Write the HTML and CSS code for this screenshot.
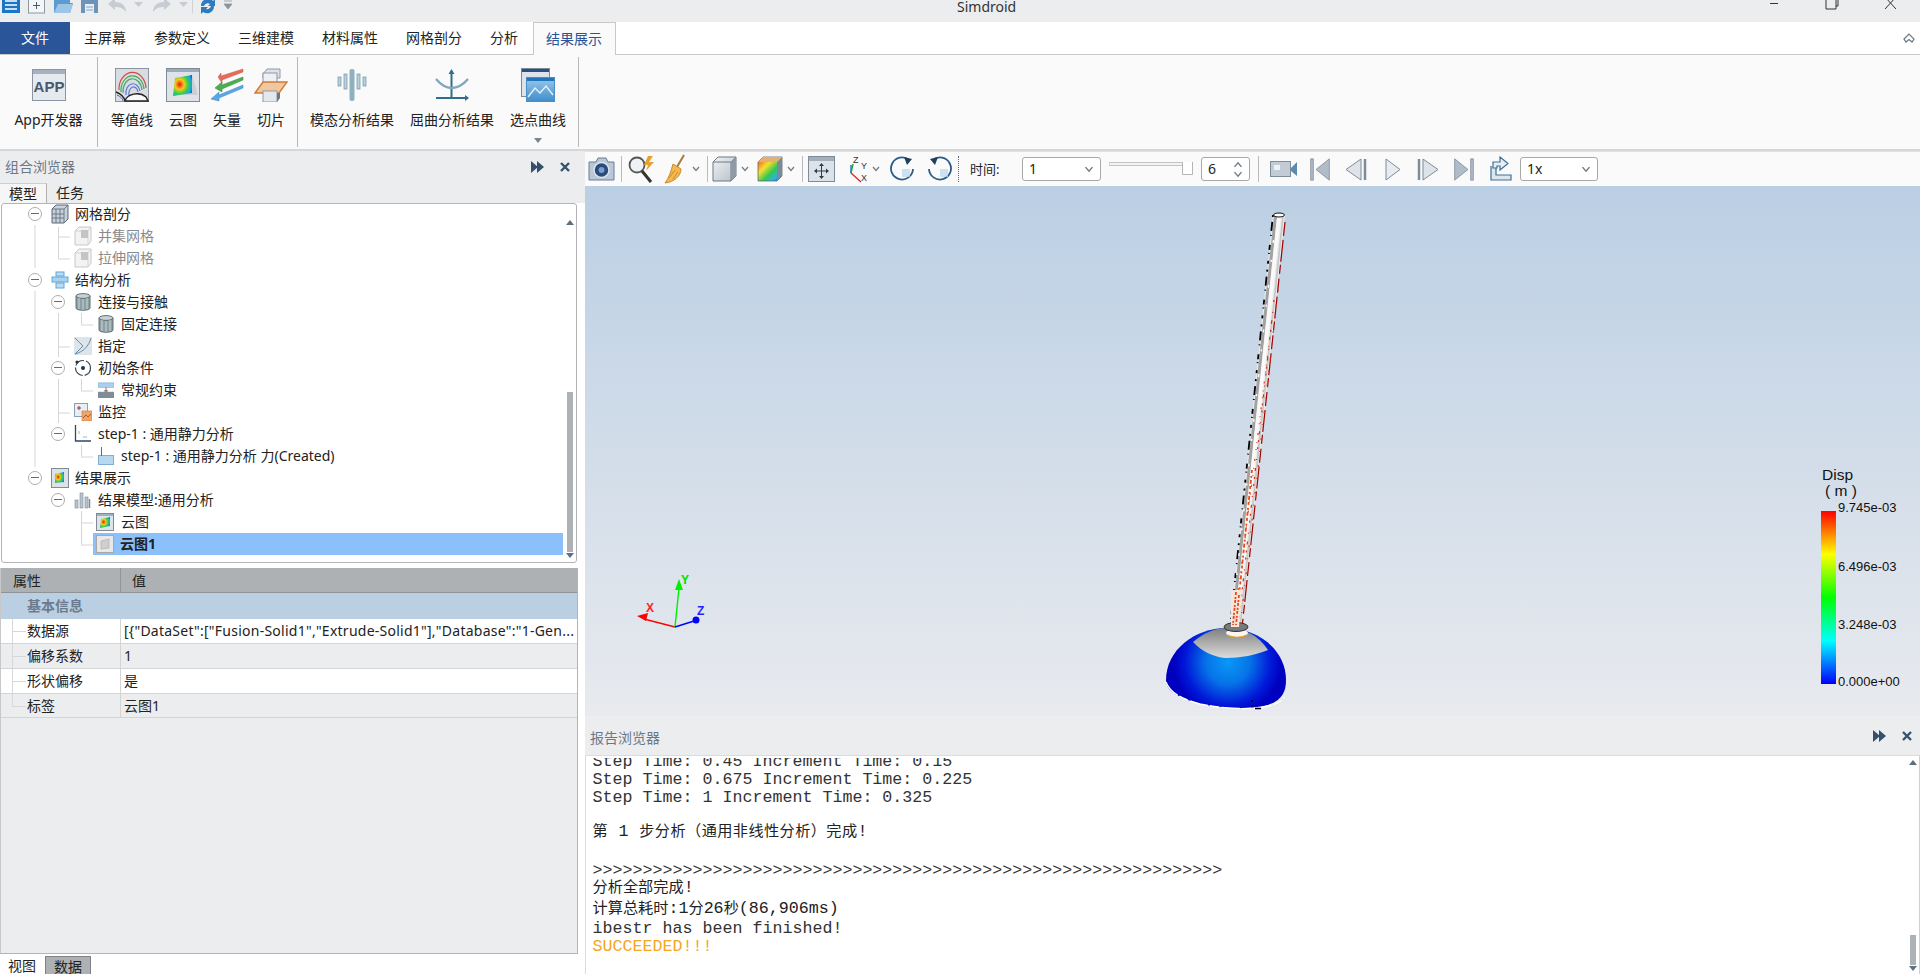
FILE: index.html
```html
<!DOCTYPE html>
<html lang="zh-CN">
<head>
<meta charset="utf-8">
<title>Simdroid</title>
<link rel="stylesheet" href="styles.css">
</head>
<body>
<svg class="defs" aria-hidden="true">
  <defs>
    <linearGradient id="gBlue" x1="0" y1="0" x2="0" y2="1"><stop offset="0" stop-color="#9cc8ec"/><stop offset="1" stop-color="#3f8ecb"/></linearGradient>
    <linearGradient id="gGrey" x1="0" y1="0" x2="1" y2="1"><stop offset="0" stop-color="#f2f4f6"/><stop offset="1" stop-color="#b6bec6"/></linearGradient>
    <linearGradient id="gRain" x1="0" y1="0" x2="1" y2="1"><stop offset="0" stop-color="#f03a20"/><stop offset=".35" stop-color="#f8e030"/><stop offset=".6" stop-color="#30c850"/><stop offset=".8" stop-color="#30b0e8"/><stop offset="1" stop-color="#2040c8"/></linearGradient>
    <radialGradient id="gHeat" cx=".35" cy=".45" r=".8"><stop offset="0" stop-color="#e81810"/><stop offset=".3" stop-color="#f8c818"/><stop offset=".55" stop-color="#38d048"/><stop offset=".8" stop-color="#18a0e8"/><stop offset="1" stop-color="#1030b8"/></radialGradient>
    <linearGradient id="gLegend" x1="0" y1="0" x2="0" y2="1"><stop offset="0" stop-color="#f00"/><stop offset=".25" stop-color="#ff0"/><stop offset=".5" stop-color="#0f0"/><stop offset=".75" stop-color="#0ff"/><stop offset="1" stop-color="#00f"/></linearGradient>
    <radialGradient id="gDome" gradientUnits="userSpaceOnUse" cx="1228" cy="662" r="54"><stop offset="0" stop-color="#0a98f6"/><stop offset=".4" stop-color="#0674e8"/><stop offset=".8" stop-color="#0018d8"/><stop offset="1" stop-color="#0000c0"/></radialGradient>
    <linearGradient id="gCap" x1="0" y1="0" x2="0" y2="1"><stop offset="0" stop-color="#7f7f7f"/><stop offset="1" stop-color="#dcdcdc"/></linearGradient>
    <linearGradient id="gView" x1="0" y1="0" x2="0" y2="1"><stop offset="0" stop-color="#bbcfe4"/><stop offset="1" stop-color="#e8eaee"/></linearGradient>
    <symbol id="iGhost" viewBox="0 0 18 20"><path d="M1 5 5 1H17V15L14 19H1Z" fill="#f3f3f3" stroke="#c8c8c8"/><path d="M1 5H14V19M14 5 17 1" fill="none" stroke="#d4d4d4"/><rect x="7" y="4" width="7" height="8" fill="#c4c4c4"/></symbol>
    <symbol id="iCyl" viewBox="0 0 16 18"><path d="M1 3V15C1 18 15 18 15 15V3Z" fill="#8ea0a4" stroke="#5f7074"/><ellipse cx="8" cy="3" rx="7" ry="2.4" fill="#c6d2d4" stroke="#5f7074"/><path d="M4 5V16M8 6V17M12 5V16" stroke="#c8d4d6"/></symbol>
    <symbol id="iHeat" viewBox="0 0 18 18"><rect x=".5" y=".5" width="17" height="17" fill="#dfe4ea" stroke="#7f8c98"/><rect x="1" y="1" width="16" height="2" fill="#9fb0c2"/><path d="M5 6 14 4V13L4 15Z" fill="url(#gHeat)"/></symbol>
    <symbol id="iChev" viewBox="0 0 8 6"><path d="M1 1 4 4.5 7 1" fill="none" stroke="#6f7c86" stroke-width="1.2"/></symbol>
    <symbol id="iSkip" viewBox="0 0 30 34"><path d="M5 1H1V33H5ZM29 1 9 17 29 33Z" fill="#b0bcc8" stroke="#6f7f8e"/></symbol>
    <symbol id="iNext" viewBox="0 0 22 23"><path d="M6 1 21 11.500 6 22Z" fill="#dde3e8" stroke="#7c8c9a"/><path d="M2 1V22" stroke="#7c8c9a" stroke-width="2.500"/></symbol>
  </defs>
</svg>

<header class="titlebar">
  <svg class="qa" width="240" height="22" viewBox="0 0 240 22">
    <path d="M2 -3H20V13H2Z" fill="#1c76c8"/><path d="M5 1H17M5 5H17M5 9H17" stroke="#fff" stroke-width="1.6"/>
    <rect x="28.500" y="-3" width="16" height="16" fill="#f4f6f8" stroke="#8c98a4"/><path d="M36.500 2V9M33 5.500H40" stroke="#505a64"/>
    <path d="M54 13V0H61L63 -2H70V3H73L70 13Z" fill="#5c9ad0"/><path d="M54 13 58 4H73L70 13Z" fill="#9cc6e8"/>
    <path d="M81 -4H98V13H81Z" fill="#6f93b8"/><rect x="85" y="4" width="9" height="9" fill="#e6eef6"/><path d="M86 7H93M86 10H93" stroke="#8aa4c0"/>
    <path d="M108 4 115 -2V2C122 2 126 6 126 12 123 8 120 7 115 7V10Z" fill="#c6ccd2"/><path d="M134 2H143L138.500 7Z" fill="#c6ccd2"/>
    <path d="M171 4 164 -2V2C157 2 153 6 153 12 156 8 159 7 164 7V10Z" fill="#c6ccd2"/><path d="M179 2H188L183.500 7Z" fill="#c6ccd2"/>
    <path d="M192.500 0V13" stroke="#cfd3d7"/>
    <path d="M201 6A7 7 0 0 1 213 1L215 -1V6H208L210 4A4 4 0 0 0 204 6Z" fill="#2e7cc0"/><path d="M214 6A7 7 0 0 1 203 12L201 14V7H208L206 9A4 4 0 0 0 211 6Z" fill="#2e7cc0"/>
    <path d="M224 1H232M224 4H232L228 9Z" fill="#8a949c" stroke="#8a949c" stroke-width=".8"/>
  </svg>
  <span class="apptitle">Simdroid</span>
  <svg class="winbtns" width="150" height="22" viewBox="1770 0 150 22">
    <path d="M1766 3.500H1778" stroke="#333"/>
    <path d="M1826 -2H1836V9H1826Z" fill="none" stroke="#333"/><path d="M1829 -2V-4H1838V6H1836" fill="none" stroke="#333"/>
    <path d="M1885 -3 1896 9M1896 -3 1885 9" stroke="#333"/>
  </svg>
</header>

<nav class="menubar">
  <span class="filetab">文件</span>
  <span class="mtab">主屏幕</span>
  <span class="mtab">参数定义</span>
  <span class="mtab">三维建模</span>
  <span class="mtab">材料属性</span>
  <span class="mtab">网格剖分</span>
  <span class="mtab">分析</span>
  <span class="mtab active">结果展示</span>
  <svg class="collapse" width="12" height="12" viewBox="0 0 12 12"><path d="M1 7 6 2 11 7 9 10 6 7.500 3 10Z" fill="none" stroke="#6c7882" stroke-width="1.2"/></svg>
</nav>

<section class="ribbon">
  <div class="rgroup g1">
    <div class="ritem">
      <svg width="34" height="32" viewBox="0 0 34 32"><rect x=".5" y=".5" width="33" height="31" fill="#e6e9ee" stroke="#8896a6"/><rect x="1" y="1" width="32" height="4" fill="#a7b2be"/><text x="17" y="23" class="appglyph">APP</text></svg>
      <span class="rlabel">App开发器</span>
    </div>
  </div>
  <div class="rgroup g2">
    <div class="ritem">
      <svg width="34" height="34" viewBox="0 0 34 34"><rect x=".5" y=".5" width="33" height="33" fill="#d9dde2" stroke="#8b96a2"/><path d="M4 22A13 16 0 0 1 31 20" fill="none" stroke="#d24a3c" stroke-width="1.2"/><path d="M6 24A11 14 0 0 1 29 21M8 25A9 12 0 0 1 27 22" fill="none" stroke="#48a860" stroke-width="1.2"/><path d="M11 27A7 9 0 0 1 25 23M14 28A4 6 0 0 1 23 24" fill="none" stroke="#5a78d8" stroke-width="1.2"/><path d="M1 24C6 26 9 29 10 33M10 33C12 26 24 23 31 29L33 33Z" fill="#f8f8f8" stroke="#222" stroke-width="1.4"/><path d="M2 27C5 28 8 31 8 33" fill="none" stroke="#4458c8"/></svg>
      <span class="rlabel">等值线</span>
    </div>
    <div class="ritem">
      <svg width="34" height="34" viewBox="0 0 34 34"><rect x=".5" y=".5" width="33" height="33" fill="#dfe3e8" stroke="#7f8c98"/><rect x="1" y="1" width="32" height="3" fill="#9aabbc"/><path d="M26 7 32 27H7" fill="#b8bcc2" opacity=".5"/><path d="M9 10 26 7V25L7 28Z" fill="url(#gHeat)"/></svg>
      <span class="rlabel">云图</span>
    </div>
    <div class="ritem">
      <svg width="34" height="34" viewBox="0 0 34 34"><path d="M8 9 11 5V8L33 1V4L12 12V15Z" fill="#e86a58" stroke="#c45a50" stroke-width=".5"/><path d="M5 20 12 14V17L33 9V12L12 21V24Z" fill="#48b050" stroke="#358040" stroke-width=".5"/><path d="M1 31 9 24V27L33 17V20L9 30V33Z" fill="#58a8e8" stroke="#3a80c0" stroke-width=".5"/></svg>
      <span class="rlabel">矢量</span>
    </div>
    <div class="ritem">
      <svg width="34" height="34" viewBox="0 0 34 34"><path d="M9 6 13 1H26V10H9Z" fill="#dde2e8" stroke="#8d98a4"/><rect x="9" y="5" width="14" height="11" fill="#eef0f3" stroke="#8d98a4"/><path d="M1 25 9 14H33L25 25Z" fill="#f0c8a0" stroke="#d07a38" stroke-width="1.4"/><rect x="9" y="23" width="14" height="11" fill="#e4e8ec" stroke="#8d98a4"/><path d="M23 34 26 30V25H23Z" fill="#6b7883"/></svg>
      <span class="rlabel">切片</span>
    </div>
  </div>
  <div class="rgroup g3">
    <div class="ritem">
      <svg width="32" height="34" viewBox="0 0 32 34"><rect x="13.500" y="1" width="5" height="32" rx="2" fill="#8fb0bf"/><rect x="8" y="6" width="3" height="15" fill="#bcd0da" stroke="#6d93a6" stroke-width=".7"/><rect x="21" y="6" width="3" height="15" fill="#bcd0da" stroke="#6d93a6" stroke-width=".7"/><rect x="2" y="9" width="3" height="9" fill="#bcd0da" stroke="#6d93a6" stroke-width=".7"/><rect x="27" y="9" width="3" height="9" fill="#bcd0da" stroke="#6d93a6" stroke-width=".7"/></svg>
      <span class="rlabel">模态分析结果</span>
    </div>
    <div class="ritem">
      <svg width="34" height="34" viewBox="0 0 34 34"><path d="M16.500 3V30M1 30H31" stroke="#2f6f8a" stroke-width="2"/><path d="M16.500 1 13.500 6H19.500ZM34 30 30 27V33Z" fill="#2f6f8a"/><path d="M1 11C7 18 12 20 16.500 20 21 20 27 18 33 11" fill="none" stroke="#7fa8bc" stroke-width="2.400"/></svg>
      <span class="rlabel">屈曲分析结果</span>
    </div>
    <div class="ritem">
      <svg width="34" height="34" viewBox="0 0 34 34"><rect x=".5" y=".5" width="28" height="28" fill="#dde3ea" stroke="#7c8a98"/><rect x="1" y="1" width="27" height="3" fill="#2a4f86"/><rect x="5.500" y="9.500" width="28" height="24" fill="url(#gBlue)" stroke="#4a8ec8"/><rect x="6" y="10" width="27" height="3" fill="#1e76b8"/><path d="M7 29 14 20 19 25 25 18 32 27" fill="none" stroke="#e6f3fb" stroke-width="1.4"/></svg>
      <span class="rlabel">选点曲线</span>
      <span class="rarrow"></span>
    </div>
  </div>
</section>

<main class="workspace">
  <aside class="left">
    <div class="panehead">
      <span class="panetitle">组合浏览器</span>
      <svg class="paneicons" width="40" height="12" viewBox="0 0 40 12"><path d="M0 0 7 6 0 12ZM6 0 13 6 6 12Z" fill="#33506c"/><path d="M30 2 38 10M38 2 30 10" stroke="#33506c" stroke-width="2.400"/></svg>
    </div>
    <div class="tabs">
      <span class="tab on">模型</span>
      <span class="tab">任务</span>
    </div>
    <div class="tree">
      <svg class="treelines" width="576" height="360" viewBox="1 203 576 360">
        <path d="M35 225V268M35 291V467M58.500 227V259H70M58.500 237H70M58.500 313V357M58.500 347H70M58.500 379V423M58.500 413H70M81.500 313V325H93M81.500 379V391H93M81.500 445V457H93M81.500 511V545H93M81.500 523H93" fill="none" stroke="#d6d6d6"/>
      </svg>
      <div class="row l0"><i class="tog"></i><svg class="ic" width="18" height="20" viewBox="0 0 18 20"><path d="M1 5 5 1H17V15L13 19H1Z" fill="#c8d0da" stroke="#5a6878"/><path d="M1 5H13V19M13 5 17 1M5 5V19M9 5V19M1 10H13M1 14H13" fill="none" stroke="#5a6878" stroke-width=".8"/></svg><span>网格剖分</span></div>
      <div class="row leaf1 dim"><svg class="ic" width="18" height="20"><use href="#iGhost"/></svg><span>并集网格</span></div>
      <div class="row leaf1 dim"><svg class="ic" width="18" height="20"><use href="#iGhost"/></svg><span>拉伸网格</span></div>
      <div class="row l0"><i class="tog"></i><svg class="ic" width="18" height="18" viewBox="0 0 18 18"><rect x="5" y="1" width="8" height="4" fill="#bcdcf2" stroke="#5ea6d8"/><rect x="1" y="6" width="16" height="5" fill="#a8d2f0" stroke="#5ea6d8"/><rect x="5" y="12" width="8" height="5" fill="#bcdcf2" stroke="#5ea6d8"/></svg><span>结构分析</span></div>
      <div class="row l1"><i class="tog"></i><svg class="ic" width="18" height="18"><use href="#iCyl"/></svg><span>连接与接触</span></div>
      <div class="row leaf2"><svg class="ic" width="16" height="18"><use href="#iCyl"/></svg><span class="t2">固定连接</span></div>
      <div class="row leaf1"><svg class="ic" width="18" height="18" viewBox="0 0 18 18"><rect width="18" height="18" fill="#dde4ec"/><path d="M1 1 9 9 1 17M17 1C15 9 9 15 1 17" fill="none" stroke="#6a8ca8"/></svg><span>指定</span></div>
      <div class="row l1"><i class="tog"></i><svg class="ic" width="18" height="18" viewBox="0 0 18 18"><circle cx="9" cy="9" r="7.500" fill="none" stroke="#33465a" stroke-width="1.2" stroke-dasharray="10 2 12 2"/><circle cx="9" cy="9" r="2" fill="#1f3246"/><circle cx="3" cy="3" r="1.600" fill="#1f3246"/></svg><span>初始条件</span></div>
      <div class="row leaf2"><svg class="ic" width="16" height="18" viewBox="0 0 18 18"><rect y="1" width="18" height="5" fill="#a9d0ee" stroke="#6ea4cc" stroke-width=".6"/><rect y="11" width="18" height="7" fill="#808c96"/><path d="M9 6V11" stroke="#d8402a"/><path d="M7 10H11" stroke="#444"/></svg><span class="t2">常规约束</span></div>
      <div class="row leaf1"><svg class="ic" width="18" height="18" viewBox="0 0 18 18"><rect x=".5" y=".5" width="13" height="13" fill="#e6eef6" stroke="#8ca0b4"/><path d="M3 5H7M5 3V7" stroke="#b02828"/><rect x="8" y="8" width="10" height="10" fill="#f0a468" stroke="#d07838" stroke-width=".6"/><path d="M9 15 12 12 14 14 17 11" fill="none" stroke="#a04818" stroke-width=".8"/></svg><span>监控</span></div>
      <div class="row l1"><i class="tog"></i><svg class="ic" width="18" height="18" viewBox="0 0 18 18"><path d="M1.500 0V16H17" fill="none" stroke="#2a4a6c" stroke-width="1.300"/><path d="M5 6V9M9 12H13" stroke="#a0b0c0"/></svg><span>step-1 : 通用静力分析</span></div>
      <div class="row leaf2"><svg class="ic" width="16" height="18" viewBox="0 0 16 18"><rect x=".5" y="8.500" width="15" height="9" fill="#b8d8f0" stroke="#7fb0d4"/><path d="M3.500 0V9" stroke="#d8402a"/></svg><span class="t2">step-1 : 通用静力分析 力(Created)</span></div>
      <div class="row l0"><i class="tog"></i><svg class="ic" width="18" height="20" viewBox="0 0 18 20"><rect x=".5" y=".5" width="17" height="19" fill="#dde2e8" stroke="#7f8c98"/><path d="M4 6 13 4V14L4 15Z" fill="url(#gHeat)"/></svg><span>结果展示</span></div>
      <div class="row l1"><i class="tog"></i><svg class="ic" width="18" height="18" viewBox="0 0 18 18"><rect x="1" y="9" width="3" height="8" fill="#b8c4ce" stroke="#7d8c98" stroke-width=".6"/><rect x="6" y="2" width="3" height="15" fill="#b8c4ce" stroke="#7d8c98" stroke-width=".6"/><rect x="11" y="6" width="3" height="11" fill="#b8c4ce" stroke="#7d8c98" stroke-width=".6"/><path d="M15.500 8V17" stroke="#7d8c98" stroke-width="1.500"/></svg><span>结果模型:通用分析</span></div>
      <div class="row leaf3"><svg class="ic" width="18" height="18"><use href="#iHeat"/></svg><span class="t2">云图</span></div>
      <div class="row leaf3 selrow"><div class="sel"><svg class="ic" width="18" height="18" viewBox="0 0 18 18"><rect x=".5" y=".5" width="17" height="17" fill="#e8e8e8" stroke="#a8a8a8"/><path d="M5 6 13 4V13L5 14Z" fill="#cfcfcf" stroke="#aaa" stroke-width=".6"/></svg><b>云图1</b></div></div>
      <div class="vscroll"><span class="up"></span><span class="thumb"></span><span class="dn"></span></div>
    </div>
    <div class="props">
      <div class="phead"><span class="pk">属性</span><span class="pv">值</span></div>
      <div class="pgroup">基本信息</div>
      <div class="prow"><span class="pk">数据源</span><span class="pv wide">[{"DataSet":["Fusion-Solid1","Extrude-Solid1"],"Database":"1-Gen...</span></div>
      <div class="prow alt"><span class="pk">偏移系数</span><span class="pv">1</span></div>
      <div class="prow"><span class="pk">形状偏移</span><span class="pv">是</span></div>
      <div class="prow alt last"><span class="pk">标签</span><span class="pv">云图1</span></div>
    </div>
    <div class="bottomtabs"><span class="btab">视图</span><span class="btab on">数据</span></div>
  </aside>

  <section class="right">
    <div class="toolbar">
      <svg class="m3" width="27" height="26" viewBox="0 0 27 26"><path d="M1 6H8L10 2H18L20 6H26V24H1Z" fill="#b8c8d8" stroke="#6a7c8e"/><circle cx="13.500" cy="14" r="7.500" fill="#2a4a7c" stroke="#dde6ee" stroke-width="1.500"/><circle cx="13.500" cy="14" r="3" fill="#7aa0c8"/></svg>
      <i class="sep m6"></i>
      <svg class="m6" width="27" height="28" viewBox="0 0 27 28"><circle cx="9" cy="10" r="7.500" fill="#eef2f6" stroke="#555" stroke-width="1.800"/><path d="M14 16 23 27" stroke="#333" stroke-width="3"/><path d="M20 1 16 10H20L18 16 26 7H21L25 1Z" fill="#e8a030"/></svg>
      <svg class="m7" width="26" height="30" viewBox="0 0 26 30"><path d="M22 1 15 13" stroke="#a87a3a" stroke-width="2"/><path d="M11 10 19 15C19 22 12 28 3 29 7 24 9 17 11 10Z" fill="#f4b850" stroke="#c88a2c"/><path d="M7 24 13 16M11 25 16 18" stroke="#c88a2c"/></svg>
      <svg class="m4" width="8" height="6"><use href="#iChev"/></svg>
      <i class="sep m7"></i>
      <svg class="m4" width="25" height="26" viewBox="0 0 25 26"><path d="M1 6 6 1H24V20L19 25H1Z" fill="url(#gGrey)" stroke="#6a7886"/><path d="M1 6H19V25M19 6 24 1" fill="none" stroke="#6a7886"/><path d="M19 6 24 1V20L19 25Z" fill="#8f9aa6"/></svg>
      <svg class="m4" width="8" height="6"><use href="#iChev"/></svg>
      <svg class="m8" width="26" height="26" viewBox="0 0 26 26"><path d="M1 6 6 1H25V20L20 25H1Z" fill="url(#gRain)" stroke="#5a6a7a" stroke-width=".8"/><path d="M20 6 25 1V20L20 25Z" fill="#7a8a98"/><path d="M1 6 6 1H25L20 6Z" fill="#e8b070"/></svg>
      <svg class="m4" width="8" height="6"><use href="#iChev"/></svg>
      <i class="sep m7"></i>
      <svg class="m5" width="27" height="26" viewBox="0 0 27 26"><rect x=".5" y=".5" width="26" height="25" fill="#dbe2ea" stroke="#7e8c9a"/><rect x="1" y="1" width="25" height="4" fill="#a3b0bc"/><path d="M13.500 8V22M7 15H20" stroke="#2e3c48"/><path d="M13.500 7 11 10H16ZM13.500 23 11 20H16ZM6 15 9 12.500V17.500ZM21 15 18 12.500V17.500Z" fill="#2e3c48"/></svg>
      <svg class="m12" width="21" height="28" viewBox="0 0 21 28"><path d="M4 10V18" stroke="#1a6cc0" stroke-width="1.400"/><path d="M4 18 6 9" stroke="#22a048" stroke-width="1.400"/><path d="M4 18 14 27" stroke="#e02828" stroke-width="1.400"/><text x="6" y="8" class="axlabel">Z</text><text x="14" y="14" class="axlabel">Y</text><text x="14" y="26" class="axlabel">X</text></svg>
      <svg class="m4" width="8" height="6"><use href="#iChev"/></svg>
      <svg class="m10" width="25" height="26" viewBox="0 0 25 26"><path d="M19 4A11 11 0 1 0 23 13" fill="none" stroke="#2c5c86" stroke-width="1.800"/><path d="M14 1 22 3 17 9Z" fill="#1f3f5f"/><path d="M12 13H20V21H12Z" fill="#b8d6ee" opacity=".7"/></svg>
      <svg class="m12" width="25" height="26" viewBox="0 0 25 26"><path d="M6 4A11 11 0 1 1 2 13" fill="none" stroke="#2c5c86" stroke-width="1.800"/><path d="M11 1 3 3 8 9Z" fill="#1f3f5f"/><path d="M13 13H21V21H13Z" fill="#b8d6ee" opacity=".7"/></svg>
      <i class="dots m6"></i>
      <span class="tlabel">时间:</span>
      <div class="combo c-time"><span>1</span><svg width="10" height="7"><use href="#iChev"/></svg></div>
      <svg class="m8" width="84" height="16" viewBox="0 0 84 16"><rect x="0" y="1.500" width="74" height="3" fill="#f2f2f2" stroke="#c4c4c4"/><path d="M73.500 1V13.500H83.500V1" fill="#fff" stroke="#b4b4b4"/></svg>
      <div class="spin"><span>6</span><span class="spinbtn"><svg width="10" height="7"><use href="#iChev" class="flip"/></svg><svg width="10" height="7"><use href="#iChev"/></svg></span></div>
      <i class="sep m8"></i>
      <svg class="m11" width="28" height="18" viewBox="0 0 28 18"><rect x=".5" y="1.500" width="20" height="15" fill="#c2ccd6" stroke="#7e8c9a"/><rect x="4" y="5" width="6" height="5" fill="#eef2f6"/><path d="M21 8 27 2V16L21 11Z" fill="#5a8ab0"/></svg>
      <svg class="m12" width="20" height="23"><use href="#iSkip"/></svg>
      <svg class="m15 flipx" width="22" height="23"><use href="#iNext"/></svg>
      <svg class="m18" width="16" height="23" viewBox="0 0 16 23"><path d="M1 1 15 11.500 1 22Z" fill="#e8ecf0" stroke="#7c8c9a"/></svg>
      <svg class="m16" width="22" height="23"><use href="#iNext"/></svg>
      <svg class="m15 flipx" width="20" height="23"><use href="#iSkip"/></svg>
      <svg class="m15" width="23" height="26" viewBox="0 0 23 26"><path d="M2 10V24H22V19H7V10" fill="#dbe6ef" stroke="#3e6e94" stroke-width="1.200"/><path d="M4 12V6H11V1L19 7.500 11 14V10H8V12Z" fill="#e6eef5" stroke="#3e6e94" stroke-width="1.200"/></svg>
      <div class="combo c-speed"><span>1x</span><svg width="10" height="7"><use href="#iChev"/></svg></div>
    </div>

    <div class="viewport">
      <svg class="scene" width="1335" height="530" viewBox="585 186 1335 530">
        <rect x="585" y="186" width="1335" height="530" fill="url(#gView)"/>
        <!-- rod -->
        <path d="M1273 215 1285 215 1242 628 1230 628Z" fill="#ececec"/>
        <path d="M1275.500 216 1232.500 628" stroke="#a2a2a2" stroke-width="3"/>
        <path d="M1279 216 1236 628" stroke="#fafafa" stroke-width="3.500"/>
        <path d="M1283 216 1240 628" stroke="#c8c8c8" stroke-width="1.800"/>
        <path d="M1273 215 1230 628" stroke="#000" stroke-width="1.800" stroke-dasharray="2 5 9 4 1 9 5 3 1 7 3 6"/>
        <path d="M1273.500 240 1231 628" stroke="#fff" stroke-width="1.400" stroke-dasharray="3 17 2 23"/>
        <path d="M1285 222 1242 628" stroke="#a10000" stroke-width="1.200" stroke-dasharray="14 4 22 3 9 5"/>
        <path d="M1272 320 1234 628" stroke="#e04818" stroke-width="1.200" stroke-dasharray="1 9 2 7 1 6"/>
        <path d="M1274 300 1238 628" stroke="#d83010" stroke-width="1.200" stroke-dasharray="2 10 1 8 3 6 2 5"/>
        <path d="M1278 290 1240 628" stroke="#d83010" stroke-width="1.200" stroke-dasharray="1 13 2 11"/>
        <path d="M1252 470 1236 625" stroke="#e84a18" stroke-width="1.800" stroke-dasharray="3 3 2 2 4 2"/>
        <ellipse cx="1279" cy="215" rx="5.500" ry="2" fill="#fff" stroke="#111"/>
        <!-- dome -->
        <path d="M1166 680C1166 650 1195 628 1226 628 1258 628 1286 650 1286 680 1286 692 1282 700 1268 705 1250 710 1220 708 1200 704 1180 698 1166 692 1166 680Z" fill="url(#gDome)"/>
        <path d="M1193 642C1204 633 1215 628 1226 628 1245 628 1258 635 1268 650 1256 655 1240 658 1226 658 1212 657 1202 651 1193 642Z" fill="url(#gCap)"/>
        <path d="M1166 682C1170 693 1182 699 1200 704 1220 708 1250 711 1268 706 1276 704 1281 702 1284 697" fill="none" stroke="#fff" stroke-width="1.400" stroke-dasharray="18 2 9 3"/>
        <path d="M1251 701H1253M1251 706H1253M1255 708.500H1261" stroke="#000" stroke-width="1.400"/>
        <!-- base -->
        <ellipse cx="1237" cy="633" rx="11" ry="4" fill="#f6f6f6"/>
        <path d="M1227 635C1232 638 1242 638 1247 635" fill="none" stroke="#e8a020" stroke-width="1.200"/>
        <ellipse cx="1236" cy="627" rx="12" ry="4.500" fill="#7a7a7a" stroke="#333"/>
        <path d="M1231 590 1242 590 1239 627 1231 627Z" fill="#f4e6dc"/>
        <path d="M1236 592 1233 625M1239 595 1236 625" stroke="#e84a18" stroke-width="1.800" stroke-dasharray="3 2 2 1"/>
        <!-- triad -->
        <path d="M675 627 644 619" stroke="#f00" stroke-width="1.400"/>
        <path d="M637 616 648 613 646 621Z" fill="#f00"/>
        <path d="M675 627 679 588" stroke="#0e0" stroke-width="1.400"/>
        <path d="M679 579 683 590H675Z" fill="#0e0"/>
        <path d="M675 627 694 621" stroke="#00f" stroke-width="1.400"/>
        <circle cx="696" cy="620" r="3.500" fill="#00f"/>
        <text x="646" y="612" class="tri tx">X</text>
        <text x="681" y="584" class="tri ty">Y</text>
        <text x="697" y="615" class="tri tz">Z</text>
        <!-- legend -->
        <text x="1822" y="479.500" class="lgt">Disp</text>
        <text x="1825" y="496" class="lgt">( m )</text>
        <rect x="1821" y="511" width="15" height="173" fill="url(#gLegend)"/>
        <text x="1838" y="512" class="lg">9.745e-03</text>
        <text x="1838" y="571" class="lg">6.496e-03</text>
        <text x="1838" y="629" class="lg">3.248e-03</text>
        <text x="1838" y="686" class="lg">0.000e+00</text>
      </svg>
    </div>

    <div class="panehead rhead">
      <span class="panetitle">报告浏览器</span>
      <svg class="paneicons" width="40" height="12" viewBox="0 0 40 12"><path d="M0 0 7 6 0 12ZM6 0 13 6 6 12Z" fill="#33506c"/><path d="M30 2 38 10M38 2 30 10" stroke="#33506c" stroke-width="2.400"/></svg>
    </div>
    <div class="report">
      <div class="log">
        <div class="ln">Step Time: 0.45 Increment Time: 0.15</div>
        <div class="ln">Step Time: 0.675 Increment Time: 0.225</div>
        <div class="ln">Step Time: 1 Increment Time: 0.325</div>
        <div class="ln zh first-zh">第<span class="mono"> 1 </span>步分析（通用非线性分析）完成<span class="mono">!</span></div>
        <div class="ln gap19">&gt;&gt;&gt;&gt;&gt;&gt;&gt;&gt;&gt;&gt;&gt;&gt;&gt;&gt;&gt;&gt;&gt;&gt;&gt;&gt;&gt;&gt;&gt;&gt;&gt;&gt;&gt;&gt;&gt;&gt;&gt;&gt;&gt;&gt;&gt;&gt;&gt;&gt;&gt;&gt;&gt;&gt;&gt;&gt;&gt;&gt;&gt;&gt;&gt;&gt;&gt;&gt;&gt;&gt;&gt;&gt;&gt;&gt;&gt;&gt;&gt;&gt;&gt;</div>
        <div class="ln zh">分析全部完成<span class="mono">!</span></div>
        <div class="ln zh total">计算总耗时<span class="mono">:1</span>分<span class="mono">26</span>秒<span class="mono">(86,906ms)</span></div>
        <div class="ln h19">ibestr has been finished!</div>
        <div class="ln ok">SUCCEEDED!!!</div>
      </div>
      <div class="vscroll rs"><span class="up"></span><span class="thumb"></span><span class="dn"></span></div>
    </div>
  </section>
</main>
</body>
</html>
```

FILE: styles.css
```css
* { box-sizing: border-box; }
html, body { margin: 0; padding: 0; }
body {
  width: 1920px;
  height: 974px;
  overflow: hidden;
  display: flex;
  flex-direction: column;
  background: #fff;
  color: #222;
  font: 14px/20px "Noto Sans", "Noto Sans CJK SC", sans-serif;
}
svg { display: block; flex: none; }
.defs { position: absolute; width: 0; height: 0; }

.titlebar { height: 22px; flex: none; display: flex; background: #ecedef; overflow: hidden; }
.apptitle { margin-left: 717px; height: 13px; line-height: 13px; font-size: 14px; color: #333; }
.winbtns { margin-left: auto; }

.menubar { height: 32px; flex: none; display: flex; align-items: stretch; background: #fff; position: relative; }
.filetab { width: 70px; background: #2a5599; color: #fff; text-align: center; line-height: 32px; }
.mtab { padding: 0 14px; line-height: 32px; }
.mtab.active { margin-left: 1px; padding: 0 12px; width: 83px; color: #2a5599; background: #fafafa; border: 1px solid #c8c8c8; border-bottom: 0; line-height: 31px; position: relative; z-index: 1; height: 33px; }
.collapse { position: absolute; right: 5px; top: 10px; }

.ribbon { height: 97px; flex: none; display: flex; background: #fafafa; border-top: 1px solid #c8c8c8; border-bottom: 2px solid #d6d6d6; }
.rgroup { display: grid; border-right: 1px solid #b8b8b8; margin: 2px 0; }
.g1 { width: 98px; grid-template-columns: 97px; }
.g2 { width: 200px; grid-template-columns: 68px 34px 54px 34px; padding-right: 9px; }
.g3 { width: 281px; grid-template-columns: 108px 92px 80px; }
.ritem { display: flex; flex-direction: column; align-items: center; padding-top: 11px; position: relative; white-space: nowrap; }
.ritem svg { height: 34px; }
.rlabel { position: absolute; top: 53px; line-height: 20px; }
.rarrow { position: absolute; top: 81px; width: 0; height: 0; border: 4px solid transparent; border-top: 5px solid #7a8490; border-bottom: 0; }

.workspace { flex: 1; min-height: 0; display: flex; }
.left { width: 585px; flex: none; display: flex; flex-direction: column; background: #fff; }

.panehead { display: flex; align-items: center; justify-content: space-between; background: #ecedef; height: 32px; flex: none; }
.panetitle { color: #6c7886; padding-left: 5px; }
.paneicons { margin-right: 14px; }

.tabs { height: 20px; flex: none; display: flex; background: #ecedef; line-height: 20px; }
.tab { width: 47px; text-align: center; }
.tab + .tab { margin-left: 8px; width: 30px; }
.tab.on { background: #f6f6f6; border-right: 1px solid #b0b0b0; border-top: 1px solid #cfcfcf; }

.tree { width: 576px; height: 360px; margin-left: 1px; flex: none; position: relative; background: #fff; border: 1px solid #b4b4b4; border-radius: 3px; padding-right: 13px; }
.treelines { position: absolute; left: -1px; top: -1px; pointer-events: none; }
.row { height: 22px; display: flex; align-items: center; white-space: nowrap; position: relative; }
.treelines + .row { margin-top: -1px; }
.row .ic { margin-right: 6px; }
.l0 { padding-left: 26px; }
.l1 { padding-left: 49px; }
.l0 .tog, .l1 .tog { margin-right: 9px; }
.leaf1 { padding-left: 72px; }
.leaf2 { padding-left: 96px; }
.leaf3 { padding-left: 94px; }
.row .t2 { margin-left: 1px; }
.dim { color: #8a8a8a; }
.tog { width: 14px; height: 14px; flex: none; border: 1px solid #aeaeae; border-radius: 50%; background: #fff; position: relative; }
.tog::after { content: ""; position: absolute; left: 2px; right: 2px; top: 5px; height: 1px; background: #6a6a6a; }
.selrow { padding-left: 91px; }
.sel { flex: 1; height: 22px; display: flex; align-items: center; background: #8cc0fa; padding-left: 3px; }
.sel b { font-weight: 700; }

.vscroll { position: absolute; right: 3px; top: 16px; bottom: 4px; width: 7px; display: flex; flex-direction: column; align-items: center; }
.vscroll .up { width: 0; height: 0; border: 4px solid transparent; border-bottom: 5px solid #5d7080; border-top: 0; }
.vscroll .thumb { margin-top: auto; width: 6px; height: 160px; background: #adb2b7; }
.vscroll .dn { margin-top: 1px; width: 0; height: 0; border: 4px solid transparent; border-top: 5px solid #5d7080; border-bottom: 0; }

.props { margin-top: 5px; width: 578px; height: 386px; flex: none; background: #ecedef; border: 1px solid #b4b4b4; border-top: 0; border-left-color: #c8c8c8; }
.phead { height: 25px; display: flex; background: #adb1b4; border-bottom: 1px solid #8f9397; line-height: 25px; }
.pk { width: 120px; flex: none; }
.phead .pk { padding-left: 12px; border-right: 1px solid #92969a; }
.pv { padding-left: 3px; min-width: 0; white-space: nowrap; }
.phead .pv { padding-left: 11px; }
.pgroup { height: 26px; background: #bacfe2; color: #6c7c8e; padding-left: 26px; font-weight: 700; line-height: 26px; }
.prow { height: 25px; display: flex; background: #fff; line-height: 24px; position: relative; }
.prow.alt { background: #ecedef; }
.prow.last { height: 24px; }
.prow .pk { padding-left: 26px; border-right: 1px solid #d4d4d4; border-bottom: 1px solid #d4d4d4; }
.prow .pv { flex: 1; border-bottom: 1px solid #d4d4d4; }
.prow .wide { letter-spacing: .25px; }
.prow::before { content: ""; position: absolute; left: 12px; width: 13px; height: 1px; top: 12px; background: #d8d8d8; }
.prow::after { content: ""; position: absolute; left: 11px; width: 1px; top: 0; bottom: 0; background: #d8d8d8; }
.prow.last::after { bottom: 11px; }

.bottomtabs { flex: 1; display: flex; align-items: flex-start; padding-top: 2px; background: #fff; }
.btab { padding: 0 8px; line-height: 20px; }
.btab.on { margin-left: 1px; padding: 0 8px; width: 46px; text-align: center; background: #adb1b4; border: 1px solid #7f8387; height: 24px; }

.right { flex: 1; min-width: 0; display: flex; flex-direction: column; }
.toolbar { height: 35px; flex: none; display: flex; align-items: center; background: #fafafa; white-space: nowrap; border-top: 1px solid #e2e2e2; }
.sep { width: 1px; height: 26px; background: #b8bcc0; flex: none; }
.dots { width: 1px; height: 26px; border-left: 1px dotted #666; flex: none; }
.m3 { margin-left: 3px; } .m4 { margin-left: 4px; } .m5 { margin-left: 5px; } .m6 { margin-left: 6px; }
.m7 { margin-left: 7px; } .m8 { margin-left: 8px; } .m10 { margin-left: 10px; } .m11 { margin-left: 11px; }
.m12 { margin-left: 12px; } .m15 { margin-left: 15px; } .m16 { margin-left: 16px; } .m18 { margin-left: 18px; }
.flipx { transform: scaleX(-1); }
.flip { transform: rotate(180deg); transform-origin: 5px 3.5px; }
.tlabel { margin-left: 11px; width: 32px; font-size: 13px; }
.combo { height: 24px; display: flex; align-items: center; justify-content: space-between; padding: 0 6px; background: #fff; border: 1px solid #a8a8a8; border-radius: 3px; flex: none; }
.c-time { margin-left: 20px; width: 79px; }
.c-speed { margin-left: 8px; width: 78px; }
.spin { margin-left: 8px; width: 49px; height: 24px; flex: none; display: flex; align-items: center; justify-content: space-between; padding: 0 6px; background: #fff; border: 1px solid #a8a8a8; border-radius: 3px; }
.spinbtn { display: flex; flex-direction: column; gap: 3px; }

.viewport { height: 530px; flex: none; }
.appglyph { font: 700 15px "Liberation Sans", sans-serif; fill: #4a5a6c; text-anchor: middle; }
.axlabel { font: 9px "Liberation Sans", sans-serif; fill: #333; }
.tri { font: 700 12px "Liberation Sans", sans-serif; }
.tx { fill: #f22; } .ty { fill: #0d0; } .tz { fill: #22f; }
.lg { font: 13px "Liberation Sans", sans-serif; fill: #111; }
.lgt { font: 15.5px "Liberation Sans", sans-serif; fill: #111; }

.rhead { height: 39px; }
.rhead .panetitle { padding-top: 4px; }
.rhead .paneicons { margin-right: 7px; }
.report { flex: 1; min-height: 0; position: relative; background: #fff; border-top: 1px solid #dcdcdc; border-left: 1px solid #dcdcdc; border-right: 1px solid #d0d0d0; padding-top: 2px; }
.log { height: 100%; overflow: hidden; padding-left: 6.5px; font-family: "Liberation Mono", "Noto Sans CJK SC", monospace; font-size: 16.67px; color: #333; }
.ln { height: 18px; line-height: 18px; white-space: pre; }
.ln:first-child { margin-top: -5px; }
.zh { font-family: "Noto Sans CJK SC", sans-serif; font-size: 15.2px; height: 19px; line-height: 11px; color: #222; }
.mono { font-family: "Liberation Mono", monospace; font-size: 16.67px; }
.first-zh { margin-top: 16px; height: 20px; line-height: 12px; letter-spacing: .4px; }
.gap19 { margin-top: 19px; }
.total { height: 20px; line-height: 14px; }
.h19 { height: 19px; line-height: 19px; }
.ok { color: #f5a623; }
.rs { top: 4px; bottom: 3px; right: 3px; }
.rs .thumb { height: 30px; }
```
